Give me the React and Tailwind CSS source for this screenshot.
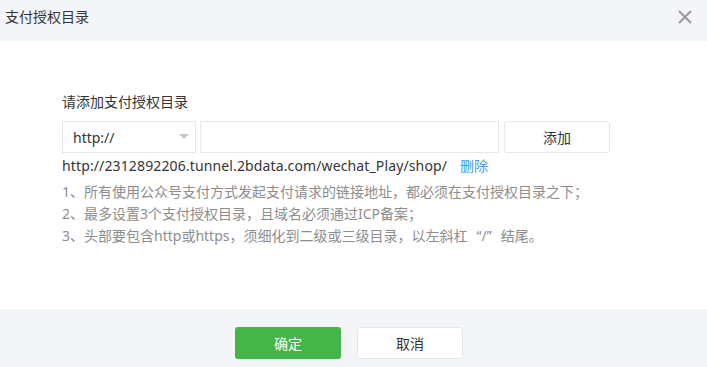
import React from "react";

export default function App() {
  const font = { fontFamily: '"Noto Sans", "Noto Sans CJK SC", sans-serif' };
  return (
    <div className="w-[707px] h-[367px] bg-white flex flex-col overflow-hidden text-[#353535]" style={font}>
      <div className="h-[41px] shrink-0 bg-[#f4f5f9] flex items-center justify-between pl-[5px] pr-[14px]">
        <span className="text-[14px] leading-none text-[#353535] -mt-[8px]">支付授权目录</span>
        <svg width="16" height="16" viewBox="0 0 16 16" className="-mt-[8px]">
          <path d="M2 2 L14 14 M14 2 L2 14" stroke="#9a9a9a" strokeWidth="2" />
        </svg>
      </div>
      <div className="flex-1 pl-[62px] pt-[52px]">
        <div className="text-[14px] leading-[18px] text-[#353535]">请添加支付授权目录</div>
        <div className="flex items-center mt-[10px] h-[32px]">
          <div className="w-[134px] h-[32px] border border-[#e7e7eb] flex items-center justify-between pl-[10px] pr-[6px]">
            <span className="text-[14px] text-[#353535]">http://</span>
            <svg width="10" height="6" viewBox="0 0 10 6"><path d="M0 0 L10 0 L5 5 Z" fill="#c8c8c8" /></svg>
          </div>
          <div className="ml-[4px] w-[299px] h-[32px] border border-[#e7e7eb]" />
          <div className="ml-[5px] w-[106px] h-[32px] border border-[#e7e7eb] rounded-[3px] flex items-center justify-center text-[14px] text-[#353535]">添加</div>
        </div>
        <div className="flex items-center mt-[1px] h-[22px] text-[14px] text-[#353535]">
          <span className="tracking-[0.13px]">http://2312892206.tunnel.2bdata.com/wechat_Play/shop/</span>
          <span className="ml-[13px] text-[14px] text-[#459ae9]">删除</span>
        </div>
        <div className="mt-[5px] text-[14px] leading-[22px] text-[#8d8d8d]">
          <div>1、所有使用公众号支付方式发起支付请求的链接地址，都必须在支付授权目录之下；</div>
          <div>2、最多设置3个支付授权目录，且域名必须通过ICP备案；</div>
          <div>
            3、头部要包含http或https，须细化到二级或三级目录，以左斜杠
            <span className="inline-block w-[14px] text-right">“</span>/<span className="inline-block w-[14px] text-left">”</span>结尾。
          </div>
        </div>
      </div>
      <div className="h-[58px] shrink-0 bg-[#f4f5f9] flex items-start justify-center pt-[18px] pr-[9px] gap-[16px]">
        <div className="w-[106px] h-[32px] rounded-[3px] bg-[#44b549] text-white text-[14px] flex items-center justify-center">确定</div>
        <div className="w-[106px] h-[32px] rounded-[3px] bg-white border border-[#e4e8eb] text-[#353535] text-[14px] flex items-center justify-center">取消</div>
      </div>
    </div>
  );
}
